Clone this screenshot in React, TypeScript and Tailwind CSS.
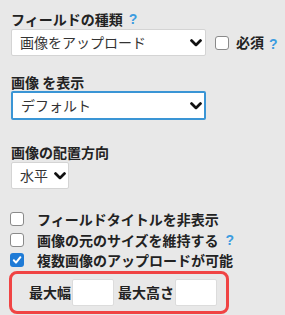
import React from "react";

const Chevron: React.FC = () => (
  <svg width="12" height="8" viewBox="0 0 12 8" className="block shrink-0">
    <polyline points="1.5,1.6 6,5.9 10.5,1.6" fill="none" stroke="#111" strokeWidth="2.8" strokeLinecap="round" strokeLinejoin="round" />
  </svg>
);

const Help: React.FC = () => (
  <span className="text-[14px] font-bold text-[#3c9ce0]" style={{ fontFamily: "'Liberation Sans', sans-serif" }}>?</span>
);

const Box: React.FC<{ checked?: boolean }> = ({ checked }) =>
  checked ? (
    <span className="flex h-[14px] w-[14px] shrink-0 items-center justify-center rounded-[3px] bg-[#1f7bd6]">
      <svg width="10" height="10" viewBox="0 0 10 10">
        <polyline points="1.8,5.2 4,7.6 8.4,2.2" fill="none" stroke="#fff" strokeWidth="2" strokeLinecap="round" strokeLinejoin="round" />
      </svg>
    </span>
  ) : (
    <span className="block h-[14px] w-[14px] shrink-0 rounded-[3px] border border-[#8a8a8a] bg-white" />
  );

export default function App() {
  return (
    <div
      className="h-[315px] w-[285px] overflow-hidden bg-[#e8e8e8] pl-[11px] pt-[10px] text-[#222]"
      style={{ fontFamily: "'Noto Sans CJK JP', 'Noto Sans', sans-serif" }}
    >
      <div className="flex h-[18px] items-center gap-[6px] text-[14px] font-bold leading-[18px]">
        フィールドの種類 <Help />
      </div>
      <div className="mt-[1px] flex items-center">
        <div className="flex h-[27px] w-[195px] shrink-0 items-center justify-between rounded-[2px] border border-[#d4d4d4] bg-white pl-[8px] pr-[3px] text-[14px] text-[#333]">
          <span>画像をアップロード</span>
          <Chevron />
        </div>
        <div className="ml-[9px]"><Box /></div>
        <span className="ml-[7px] text-[14px] font-bold">必須</span>
        <span className="ml-[5px]"><Help /></span>
      </div>

      <div className="mt-[17px] h-[18px] text-[14px] font-bold leading-[18px]">画像 を表示</div>
      <div className="flex h-[29px] w-[195px] items-center justify-between rounded-[2px] border-2 border-[#3a95d5] bg-white pl-[8px] pr-[2px] text-[14px] text-[#333]">
        <span>デフォルト</span>
        <Chevron />
      </div>

      <div className="mt-[23px] h-[18px] text-[14px] font-bold leading-[18px]">画像の配置方向</div>
      <div className="mt-[1px] flex h-[27px] w-[58px] items-center gap-[6px] rounded-[2px] border border-[#d4d4d4] bg-white pl-[8px] text-[14px] text-[#333]">
        <span>水平</span>
        <Chevron />
      </div>

      <div className="mt-[23px] flex flex-col gap-[6px] text-[14px] font-bold leading-[14px]">
        <div className="ml-[-1px] flex items-center gap-[13px]">
          <Box /> <span>フィールドタイトルを非表示</span>
        </div>
        <div className="ml-[-1px] flex items-center gap-[13px]">
          <Box />
          <span>画像の元のサイズを維持する</span>
          <span className="ml-[-6px]"><Help /></span>
        </div>
        <div className="ml-[-1px] flex items-center gap-[13px]">
          <Box checked /> <span>複数画像のアップロードが可能</span>
        </div>
      </div>

      <div className="ml-[-2px] mt-[4px] flex h-[43px] w-[220px] items-center rounded-[8px] border-[3px] border-[#f04444] pl-[17px] text-[14px] font-bold">
        <span>最大幅</span>
        <span className="ml-[1px] block h-[27px] w-[42px] rounded-[2px] border border-[#dcdcdc] bg-white" />
        <span className="ml-[4px]">最大高さ</span>
        <span className="ml-[1px] block h-[27px] w-[42px] rounded-[2px] border border-[#dcdcdc] bg-white" />
      </div>
    </div>
  );
}
